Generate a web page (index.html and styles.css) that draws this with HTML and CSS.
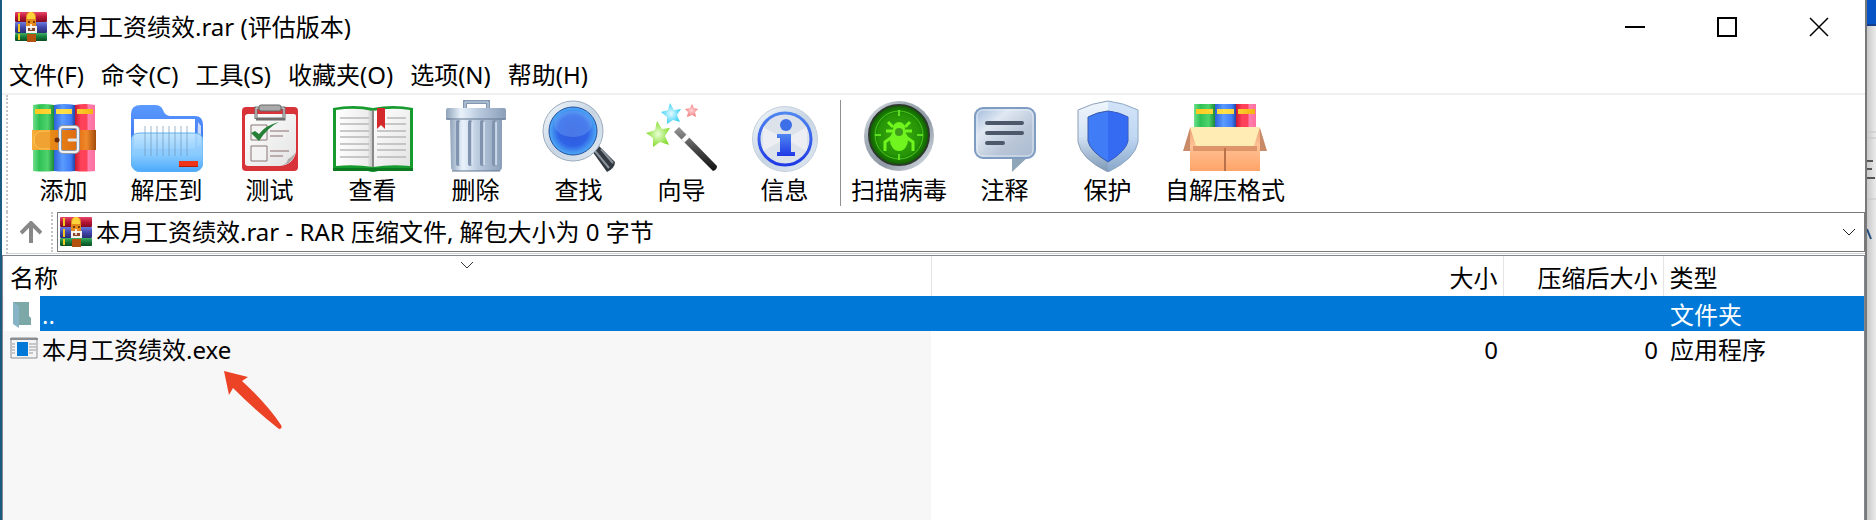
FILE: index.html
```html
<!DOCTYPE html>
<html lang="zh-CN">
<head>
<meta charset="utf-8">
<title>本月工资绩效.rar (评估版本)</title>
<link rel="stylesheet" href="styles.css">
</head>
<body>
<svg class="defs" aria-hidden="true">
  <defs>
    <linearGradient id="gGreen"><stop offset="0" stop-color="#6fe08a"/><stop offset=".3" stop-color="#2fc155"/><stop offset=".7" stop-color="#4fd46c"/><stop offset="1" stop-color="#1c8a35"/></linearGradient>
    <linearGradient id="gBlue"><stop offset="0" stop-color="#2f62d8"/><stop offset=".4" stop-color="#5a9bff"/><stop offset=".8" stop-color="#3f7df5"/><stop offset="1" stop-color="#2146a5"/></linearGradient>
    <linearGradient id="gRed"><stop offset="0" stop-color="#c81832"/><stop offset=".3" stop-color="#ff4259"/><stop offset=".6" stop-color="#ff4259"/><stop offset=".65" stop-color="#ff7fae"/><stop offset="1" stop-color="#ff6fa0"/></linearGradient>
    <linearGradient id="gBelt"><stop offset="0" stop-color="#f7b03c"/><stop offset=".3" stop-color="#e88a16"/><stop offset=".7" stop-color="#e06c10"/><stop offset=".85" stop-color="#f0892a"/><stop offset="1" stop-color="#a54c0c"/></linearGradient>
    <linearGradient id="gYellow"><stop offset="0" stop-color="#ffc81e"/><stop offset=".5" stop-color="#ffe04a"/><stop offset="1" stop-color="#f5b410"/></linearGradient>
    <linearGradient id="gFolderBack" x2="0" y2="1"><stop offset="0" stop-color="#5b9bff"/><stop offset="1" stop-color="#2f62ea"/></linearGradient>
    <linearGradient id="gFolderFront" x2="0" y2="1"><stop offset="0" stop-color="#b5e0ff" stop-opacity=".85"/><stop offset=".55" stop-color="#8acbff"/><stop offset="1" stop-color="#49a8fb"/></linearGradient>
    <linearGradient id="gPaper" x2="1" y2="1"><stop offset="0" stop-color="#fff"/><stop offset="1" stop-color="#e3e3e3"/></linearGradient>
    <linearGradient id="gSteel"><stop offset="0" stop-color="#8fa3bb"/><stop offset=".25" stop-color="#e9f2fb"/><stop offset=".55" stop-color="#b9cade"/><stop offset="1" stop-color="#8b9fba"/></linearGradient>
    <linearGradient id="gRing" x2="1" y2="1"><stop offset="0" stop-color="#f4f8fc"/><stop offset=".5" stop-color="#c7d5e3"/><stop offset="1" stop-color="#dfe9f2"/></linearGradient>
    <radialGradient id="gLens" cy=".5" r=".52"><stop offset="0" stop-color="#2f58dc"/><stop offset=".6" stop-color="#2f63e6"/><stop offset="1" stop-color="#52b4f8"/></radialGradient>
    <linearGradient id="gPage"><stop offset="0" stop-color="#fff"/><stop offset=".85" stop-color="#ededed"/><stop offset="1" stop-color="#b9b9b9"/></linearGradient>
    <linearGradient id="gInfo" x2="0" y2="1"><stop offset="0" stop-color="#4f86f0"/><stop offset="1" stop-color="#1f39e6"/></linearGradient>
    <linearGradient id="gChrome" x2="1" y2="1"><stop offset="0" stop-color="#e6ebf0"/><stop offset=".3" stop-color="#a3adb8"/><stop offset=".6" stop-color="#8f99a5"/><stop offset="1" stop-color="#e2e8ee"/></linearGradient>
    <radialGradient id="gScan"><stop offset="0" stop-color="#3fae12"/><stop offset=".7" stop-color="#259406"/><stop offset="1" stop-color="#0e5c00"/></radialGradient>
    <linearGradient id="gBubble" x2="1" y2="1"><stop offset="0" stop-color="#9fb9dc"/><stop offset=".3" stop-color="#e0e8f2"/><stop offset=".65" stop-color="#b9c6d8"/><stop offset="1" stop-color="#a9bad0"/></linearGradient>
    <linearGradient id="gShield" x2="0" y2="1"><stop offset="0" stop-color="#f0f6fc"/><stop offset=".5" stop-color="#d3e3f4"/><stop offset="1" stop-color="#7c97b5"/></linearGradient>
    <linearGradient id="gBox" x2="0" y2="1"><stop offset="0" stop-color="#e9a072"/><stop offset=".4" stop-color="#ffc196"/><stop offset="1" stop-color="#ffa468"/></linearGradient>
    <linearGradient id="gBookR" x2="0" y2="1"><stop offset="0" stop-color="#e8486a"/><stop offset=".5" stop-color="#b91636"/><stop offset="1" stop-color="#7d0c22"/></linearGradient>
    <linearGradient id="gBookB" x2="0" y2="1"><stop offset="0" stop-color="#6b7be0"/><stop offset=".5" stop-color="#4146a8"/><stop offset="1" stop-color="#292c74"/></linearGradient>
    <linearGradient id="gBookG" x2="0" y2="1"><stop offset="0" stop-color="#3fae62"/><stop offset=".5" stop-color="#147a3a"/><stop offset="1" stop-color="#0a4d22"/></linearGradient>
    <linearGradient id="gWand" x2="0" y2="1"><stop offset="0" stop-color="#999"/><stop offset=".5" stop-color="#4a4a4a"/><stop offset="1" stop-color="#111"/></linearGradient>
    <radialGradient id="gStarG"><stop offset="0" stop-color="#eaffd8"/><stop offset="1" stop-color="#84dc2c"/></radialGradient>
    <radialGradient id="gStarB"><stop offset="0" stop-color="#e6fbff"/><stop offset="1" stop-color="#3ccff5"/></radialGradient>
    <radialGradient id="gStarR"><stop offset="0" stop-color="#ffd5d5"/><stop offset="1" stop-color="#f37d80"/></radialGradient>
    <symbol id="books" viewBox="0 0 32 30">
      <rect x="0" y="0" width="32" height="10" rx="1" fill="url(#gBookR)"/>
      <rect x="0" y="10" width="32" height="11" rx="1" fill="url(#gBookB)"/>
      <rect x="0" y="21" width="32" height="8" rx="1" fill="url(#gBookG)"/>
      <path d="M4 1v8M4 12v8M4 22v6" stroke="#f2c81e" stroke-width="2"/>
      <path d="M11 5q0-5 5-5t5 5v11H11z" fill="#e58a1c"/>
      <path d="M12 4q1-4 4-4t4 4v3h-8z" fill="#ffd33c"/>
      <path d="M13 10h2M18 10h2" stroke="#7a3a08" stroke-width="2"/>
      <path d="M12 20v-5h9v5z" fill="#8a4a2a" stroke="#f5f2f0" stroke-width="2"/>
      <path d="M16 12v6" stroke="#fff" stroke-width="1.5"/>
      <path d="M12 22h9v8h-9z" fill="#b4520f"/>
    </symbol>
  </defs>
</svg>
<div class="desktop">
  <main class="window">
    <header class="titlebar">
      <svg class="app-icon" width="32" height="30" aria-hidden="true"><use href="#books"/></svg>
      <h1 class="title">本月工资绩效.rar (评估版本)</h1>
      <div class="controls">
        <button class="control" aria-label="最小化"><svg width="20" height="20"><path d="M0 10h20" stroke="#000" stroke-width="2"/></svg></button>
        <button class="control" aria-label="最大化"><svg width="20" height="20"><path d="M1 1h18v18H1z" fill="none" stroke="#000" stroke-width="2"/></svg></button>
        <button class="control" aria-label="关闭"><svg width="20" height="20"><path d="M1 1l18 18M19 1L1 19" stroke="#000" stroke-width="1.5"/></svg></button>
      </div>
    </header>
    <nav class="menu">
      <button class="menu-item">文件(F)</button>
      <button class="menu-item">命令(C)</button>
      <button class="menu-item">工具(S)</button>
      <button class="menu-item">收藏夹(O)</button>
      <button class="menu-item">选项(N)</button>
      <button class="menu-item">帮助(H)</button>
    </nav>
    <div class="toolbar">
      <button class="tool">
        <svg class="tool-icon" width="72" height="72" viewBox="0 0 72 72">
          <path d="M5 5q10-2 21 0v66q-11 1-21 0z" fill="url(#gGreen)"/><path d="M26 5q10-2 21 0v66q-11 1-21 0z" fill="url(#gBlue)"/><path d="M47 5q10-2 20 0v66q-10 1-20 0z" fill="url(#gRed)"/>
          <path d="M7 9h16v5H7zM28 9h16v5H28zM49 9h16v5H49z" fill="url(#gYellow)"/>
          <path d="M4 30h64v20H4z" fill="url(#gBelt)"/><path d="M22 31H12q-6 3-6 9t6 9h10" fill="#f0a233" stroke="#ffc85a"/>
          <rect x="32" y="27" width="18" height="25" rx="3" fill="none" stroke="#8f98a3" stroke-width="4"/><rect x="32" y="27" width="18" height="25" rx="3" fill="none" stroke="#eef0f4" stroke-width="2"/>
          <path d="M41 40h8" stroke="#dfe3ea" stroke-width="3" stroke-linecap="round"/><circle cx="29" cy="40" r="2.5" fill="#6b2d08"/>
        </svg><span>添加</span></button>
      <button class="tool">
        <svg class="tool-icon" width="72" height="72" viewBox="0 0 72 72">
          <path d="M0 14Q0 5 10 5h14q6 0 8 5 2 6 8 6h24q8 0 8 9v35H0z" fill="url(#gFolderBack)"/>
          <path d="M67 22l3 4v20h-4z" fill="#c9d9f5"/><path d="M3 19h61v30H3z" fill="#fff"/>
          <path d="M0 41q0-8 9-8h54q9 0 9 8v20q0 11-11 11H11Q0 72 0 61z" fill="url(#gFolderFront)" stroke="#5fb2f5"/>
          <path d="M14 26v30M20 26v30M26 26v30M32 26v30M38 26v30M44 26v30M50 26v30M56 26v30" stroke="#7095b5" stroke-width="1.5" opacity=".45"/>
          <path d="M48 61h19v6H48z" fill="#ee3517"/><path d="M48 66h19v1H48z" fill="#b31c08"/>
        </svg><span>解压到</span></button>
      <button class="tool">
        <svg class="tool-icon" width="72" height="72" viewBox="0 0 72 72">
          <rect x="8" y="7" width="56" height="64" rx="4" fill="#d9333a"/><path d="M14 14h46q2 0 2 2v36q-3 13-16 14H14q-3 0-3-3V17q0-3 3-3z" fill="url(#gPaper)"/><path d="M61 53q-3 12-16 13 8-1 9-7 3-1 7-6" fill="#aaa"/>
          <path d="M22 19V8h28v11H22" fill="none" stroke="#6f6f6f" stroke-width="3"/><path d="M22 18V8h28v10" fill="none" stroke="#ddd"/>
          <rect x="25" y="5" width="22" height="6" rx="2" fill="#aaa" stroke="#666"/>
          <path d="M17 25h16v15H17zM17 46h16v15H17z" fill="#f3f3f3" stroke="#8a7676"/>
          <path d="M36 31h19M36 36h13M36 51h19M36 56h13" stroke="#8a6f6f"/>
          <path d="M17 33l4-2 4 3q7-9 20-12Q34 27 25 41z" fill="#278037"/>
        </svg><span>测试</span></button>
      <button class="tool">
        <svg class="tool-icon" width="80" height="72" viewBox="0 0 80 72">
          <path d="M0 8q20-4 40 0 20-4 40 0v63H45q-5 2-10 0H0z" fill="#189b2e"/><path d="M0 68h80v3H0z" fill="#0c7a20"/>
          <path d="M3 10q20-3 37 1v56q-18-3-37-1z" fill="url(#gPage)"/><path d="M77 10q-20-3-37 1v56q18-3 37-1z" fill="url(#gPaper)"/><path d="M40 10v57" stroke="#888" stroke-width="2"/>
          <path d="M7 18h29M7 24h29M7 31h29M7 37h29M7 44h29M7 50h29M7 57h29M44 24h29M44 31h29M44 37h29M44 44h29M44 50h29M44 57h29M54 18h19" stroke="#b8b8b8" stroke-width="1.5"/>
          <path d="M44 8h8v21l-4-4-4 4z" fill="#d5282c"/>
        </svg><span>查看</span></button>
      <button class="tool">
        <svg class="tool-icon" width="72" height="72" viewBox="0 0 72 72">
          <path d="M25 10V2h23v8" fill="none" stroke="#8297b1" stroke-width="4"/><path d="M25 9V2h23v7" fill="none" stroke="#ccd9e6"/>
          <path d="M10 18h52v49q0 4-4 4H15q-4 0-4-4z" fill="url(#gSteel)"/>
          <path d="M18 22v42M30 22v42M42 22v42M54 22v42" stroke="#8094b0" stroke-width="4" stroke-linecap="round"/><path d="M20 22v43M32 22v43M44 22v43M56 22v43" stroke="#dce8f3" stroke-width="1.5"/>
          <rect x="6" y="8" width="60" height="12" rx="2" fill="url(#gSteel)"/><path d="M6 19h60M12 71h48" stroke="#61758e"/>
        </svg><span>删除</span></button>
      <button class="tool">
        <svg class="tool-icon" width="74" height="72" viewBox="0 0 74 72">
          <path d="M50 51l6-6 17 17q0 6-8 10z" fill="#333940"/><path d="M53 51l14 17M59 49l12 14" stroke="#8a929c" stroke-width="2"/>
          <circle cx="31" cy="31" r="30" fill="url(#gRing)" stroke="#9cacbd"/><circle cx="31" cy="31" r="24" fill="url(#gLens)" stroke="#274e9e"/>
          <ellipse cx="31" cy="24" rx="19" ry="13" fill="#7aaef8" opacity=".35"/>
        </svg><span>查找</span></button>
      <button class="tool">
        <svg class="tool-icon" width="72" height="72" viewBox="0 0 72 72">
          <path d="M28 32l5-5 38 39q0 4-4 5z" fill="url(#gWand)"/><path d="M37 41l5-5" stroke="#fff" stroke-width="4"/>
          <path d="M11 21l5 8 8-1-5 8 4 9-9-3-7 5v-9L0 33l9-3z" fill="url(#gStarG)"/>
          <path d="M24 3l4 7 7-1-4 6 3 7-7-2-6 4v-7l-6-5 7-2z" fill="url(#gStarB)"/>
          <path d="M46 4l2 4 4 1-3 3 1 5-4-2-5 2 1-5-3-3 5-1z" fill="url(#gStarR)"/>
        </svg><span>向导</span></button>
      <button class="tool">
        <svg class="tool-icon" width="72" height="72" viewBox="0 0 72 72">
          <circle cx="36" cy="39" r="32.5" fill="url(#gRing)" stroke="#c5d0dc"/><circle cx="36" cy="39" r="26" fill="#dce2e9" stroke="url(#gInfo)" stroke-width="3"/>
          <path d="M36 39L14 27v24zM36 39l22-12v24z" fill="#f2f4f7" opacity=".7"/>
          <circle cx="37" cy="25" r="6" fill="#3d6fe8"/><path d="M28 34h14v18h4v4H28v-4h3V38h-3z" fill="url(#gInfo)"/>
        </svg><span>信息</span></button>
      <hr class="tool-separator">
      <button class="tool">
        <svg class="tool-icon" width="72" height="72" viewBox="0 0 72 72">
          <circle cx="36" cy="36" r="35" fill="url(#gChrome)"/><circle cx="36" cy="35" r="30" fill="url(#gScan)" stroke="#2d3b2c" stroke-width="2"/>
          <circle cx="36" cy="35" r="24" fill="none" stroke="#48c71c"/><path d="M36 10v6M36 54v6M12 35h6M54 35h6" stroke="#5fdf22" stroke-width="2"/>
          <g fill="none" stroke="#70f51f" stroke-width="3"><path d="M30 27l-5-5M42 27l5-5M23 31h26M29 37l-7 5v9M43 37l7 5v9"/></g>
          <circle cx="36" cy="28" r="6" fill="#70f51f"/><ellipse cx="36" cy="40" rx="9" ry="11" fill="#70f51f"/><circle cx="36" cy="32" r="4" fill="#3f9d1c"/>
        </svg><span>扫描病毒</span></button>
      <button class="tool">
        <svg class="tool-icon" width="72" height="72" viewBox="0 0 72 72">
          <path d="M43 56h17L43 72z" fill="#8fa5b8"/><rect x="6" y="8" width="60" height="50" rx="8" fill="url(#gBubble)" stroke="#7f9cc3" stroke-width="2"/>
          <rect x="8" y="10" width="56" height="46" rx="6" fill="none" stroke="#e9f1fa" opacity=".8"/>
          <path d="M18 23h35M18 33h35M18 43h16" stroke="#4d586a" stroke-width="4" stroke-linecap="round"/>
        </svg><span>注释</span></button>
      <button class="tool">
        <svg class="tool-icon" width="72" height="72" viewBox="0 0 72 72">
          <path d="M36 1q16 2 30 9v32q-3 17-30 30Q9 59 6 42V10q14-7 30-9z" fill="url(#gShield)" stroke="#8ca0b8"/>
          <path d="M36 1q16 2 30 9v32q-3 17-30 30z" fill="#9fc4f0" opacity=".35"/>
          <path d="M36 11q11 1 20 6v24q-2 10-20 21Q18 51 16 41V17q9-5 20-6z" fill="#3f7cf5" stroke="#3a58a8"/><path d="M36 11q11 1 20 6v24q-2 10-20 21z" fill="#2f5ff0" opacity=".6"/>
        </svg><span>保护</span></button>
      <button class="tool">
        <svg class="tool-icon" width="84" height="72" viewBox="0 0 84 72">
          <path d="M11 4h21v26H11z" fill="url(#gGreen)"/><path d="M32 4h21v26H32z" fill="url(#gBlue)"/><path d="M53 4h20v26H53z" fill="url(#gRed)"/>
          <path d="M13 9h17v5H13zM34 9h17v5H34zM55 9h17v5H55z" fill="url(#gYellow)"/>
          <path d="M7 28L0 51h8zM77 28l7 23h-8z" fill="#c98a68"/><path d="M7 28h70v43H7z" fill="url(#gBox)"/>
          <path d="M10 46h64v5H10z" fill="#c97a50" opacity=".6"/><path d="M42 48v23" stroke="#b9714a" stroke-width="2"/><path d="M7 27h70l-6 19H13z" fill="#ffecb5"/>
        </svg><span>自解压格式</span></button>
    </div>
    <div class="address-row">
      <button class="up" aria-label="上一级"><svg width="22" height="22"><path d="M11 22V2M1 12L11 2l10 10" fill="none" stroke="#888" stroke-width="4"/></svg></button>
      <div class="address">
        <svg width="32" height="30" aria-hidden="true"><use href="#books"/></svg>
        <select class="path" aria-label="地址"><option>本月工资绩效.rar - RAR 压缩文件, 解包大小为 0 字节</option></select>
        <svg class="caret" width="14" height="8" aria-hidden="true"><path d="M1 1l6 6 6-6" fill="none" stroke="#222"/></svg>
      </div>
    </div>
    <section class="list">
      <table class="files">
        <colgroup><col class="col-icon"><col><col class="col-size"><col class="col-packed"><col class="col-type"></colgroup>
        <thead><tr>
          <th class="name-head" colspan="2">名称<svg class="sort" width="14" height="8" aria-hidden="true"><path d="M1 1l6 6 6-6" fill="none" stroke="#333"/></svg></th>
          <th class="num">大小</th><th class="num">压缩后大小</th><th>类型</th>
        </tr></thead>
        <tbody>
          <tr class="selected"><td class="icon-cell"><svg width="32" height="32" aria-hidden="true"><path d="M5 4h16v14l2 2v7H10z" fill="#7da8a8"/><path d="M5 4l6 4v22l-6-4z" fill="#86b3c6"/></svg></td><td>..</td><td class="num"></td><td class="num"></td><td>文件夹</td></tr>
          <tr><td class="icon-cell"><svg width="32" height="32" aria-hidden="true"><path d="M3 5h26v20H3z" fill="#f4f4f4" stroke="#8b8f94"/><path d="M2 5h28v2H2z" fill="#8b8f94"/><path d="M9 9h11v14H9z" fill="#0078d7"/><path d="M4 11h3M4 14h3M4 17h3M4 20h3M21 11h7M21 14h7M21 17h7M21 20h4" stroke="#999"/></svg></td><td class="file">本月工资绩效.exe
            <svg class="pointer" width="60" height="62" aria-hidden="true"><path d="M0 0l24 6-6 4q25 23 39 44 2 4-2 4Q32 40 9 17l-4 7z" fill="#ec4326"/></svg></td><td class="num">0</td><td class="num">0</td><td>应用程序</td></tr>
        </tbody>
      </table>
    </section>
  </main>
  <svg class="behind" width="9" height="520" aria-hidden="true"><path d="M0 0h9v25H0z" fill="#0553c4"/><path d="M0 24h9v2H0z" fill="#123e8c"/><path d="M0 132h9M0 138h9M0 199h9" stroke="#c4c4c4"/><path d="M0 161h6M0 169h5M0 178h8" stroke="#555" stroke-width="2"/><path d="M0 229l4 10" stroke="#234f7c" stroke-width="2"/></svg>
</div>
</body>
</html>
```
FILE: styles.css
```css
* { box-sizing: border-box; }
body { margin: 0; overflow: hidden; color: #000; font: 24px/32px "Noto Sans", "Noto Sans CJK SC", sans-serif; }
button, select { font: inherit; color: inherit; background: none; border: 0; padding: 0; }
svg { display: block; flex: none; }
.defs { position: absolute; width: 0; height: 0; }
.desktop { display: flex; height: 100vh; border-left: 2px solid #1b5b80; background: #e8e8e8; }
.window { flex: 1; min-width: 0; display: flex; flex-direction: column; background: #fff; border-right: 2px solid #77787a; }
.behind { background: linear-gradient(90deg, #c8c8c8, #ebebeb); }

.titlebar { display: flex; align-items: center; height: 54px; padding-left: 13px; gap: 4px; }
.title { margin: 0; font: inherit; flex: 1; }
.controls { display: flex; }
.control { width: 92px; height: 54px; display: grid; place-items: center; }

.menu { display: flex; gap: 17px; height: 41px; padding: 2px 0 0 7px; align-items: center; border-bottom: 2px solid #f0f0f0; }

.toolbar { display: flex; margin-left: 4px; padding: 5px 0 6px 4px; border-left: 2px dotted #c4c4c4; }
.tool { display: flex; flex-direction: column; align-items: center; min-width: 103px; height: 106px; padding: 0 6px; gap: 2px; white-space: nowrap; }
.tool-separator { width: 1px; height: 106px; margin: 0 4px; border: 0; background: #909090; }

.address-row { display: flex; height: 42px; margin-left: 4px; padding-bottom: 1px; border-left: 2px dotted #c4c4c4; border-bottom: 1px solid #d4d4d4; }
.up { width: 45px; padding-left: 2px; display: grid; place-items: center; border-right: 2px dotted #c4c4c4; }
.address { flex: 1; display: grid; grid-template-columns: 32px 1fr; align-items: center; gap: 4px; margin-left: 4px; padding-left: 2px; border: 1px solid #7a7a7a; }
.path { grid-area: 1 / 2; width: 100%; height: 36px; appearance: none; }
.caret { grid-area: 1 / 2; justify-self: end; margin-right: 8px; pointer-events: none; }

.list { flex: 1; margin-top: 1px; padding-left: 1px; border: 1px solid #828790; border-bottom: 0; background: linear-gradient(#f7f7f7, #f7f7f7) no-repeat 0 40px / calc(100% - 933px) 100%; }
.files { width: 100%; table-layout: fixed; border-collapse: collapse; }
.col-icon { width: 36px; }
.col-size { width: 572px; }
.col-packed { width: 160px; }
.col-type { width: 201px; }
th { position: relative; height: 40px; padding: 3px 5px 0 6px; font-weight: 400; text-align: left; border-left: 1px solid #e5e5e5; }
th:first-child { border-left: 0; }
td { height: 35px; padding: 2px 7px 0; }
td:nth-child(2) { padding: 2px 2px 0; }
.num { text-align: right; padding-right: 5px; }
.selected td { color: #fff; background: #0078d7; }
.selected .icon-cell { background: #fff; }
.icon-cell { padding: 0 0 0 4px; }
.sort { position: absolute; top: 5px; left: 50%; margin-left: -7px; }
.file { position: relative; }
.pointer { position: absolute; left: 184px; top: 40px; }
```
